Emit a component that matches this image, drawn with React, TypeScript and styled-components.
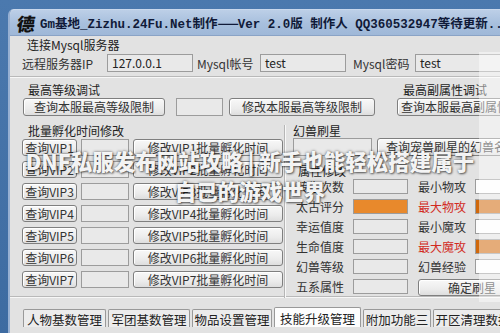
import React from 'react';
import styled, { createGlobalStyle } from 'styled-components';

const GlobalStyle = createGlobalStyle`
  html, body {
    margin: 0;
    padding: 0;
  }
  body {
    width: 500px;
    height: 333px;
    overflow: hidden;
    position: relative;
    background: linear-gradient(180deg, #4b79ae 0%, #3d6ba1 100%);
    font-family: "Noto Sans CJK SC", "Liberation Sans", sans-serif;
    color: #333;
  }
`;

const Window = styled.div`
  margin: 9px 0 0 8px;
  width: 520px;
  height: 330px;
  background: #e2e2e2;
  border-left: 2px solid #97b0d2;
  border-top: 1px solid #c9d8ec;
  border-top-left-radius: 6px;
  overflow: hidden;
`;

const TitleBar = styled.div`
  height: 25px;
  display: flex;
  align-items: center;
  gap: 3px;
  padding-left: 7px;
  background: linear-gradient(180deg, #bccfe7 0%, #a7bfdd 55%, #9fb8d8 100%);
  border-bottom: 1px solid #8aa3c6;
`;

const AppIcon = styled.span`
  width: 20px;
  font-size: 18px;
  font-weight: 900;
  line-height: 20px;
  color: #111;
  transform: skewX(-8deg);
`;

const TitleText = styled.span`
  font-family: "Liberation Mono", "Noto Sans CJK SC", monospace;
  font-size: 12.5px;
  font-weight: bold;
  color: #101a38;
  white-space: nowrap;
`;

const Dash = styled.span`
  font-family: "Noto Sans CJK SC", sans-serif;
  letter-spacing: -1px;
`;

const Client = styled.div`
  padding: 3px 0 0 12px;
`;

const Legend = styled.div<{ $indent?: number }>`
  height: 12px;
  line-height: 12px;
  font-size: 12px;
  padding-left: ${p => p.$indent ?? 6}px;
  color: #222;
  white-space: nowrap;
`;

const Row = styled.div<{ $top?: number }>`
  display: flex;
  align-items: center;
  margin-top: ${p => p.$top ?? 0}px;
`;

const Label = styled.span<{ $w: number; $red?: boolean }>`
  width: ${p => p.$w}px;
  flex: none;
  font-size: 12px;
  line-height: 15px;
  white-space: nowrap;
  color: ${p => (p.$red ? '#d22a22' : '#333')};
`;

const Field = styled.div<{ $w: number; $h?: number; $bg?: string; $ml?: number }>`
  box-sizing: border-box;
  flex: none;
  width: ${p => p.$w}px;
  height: ${p => p.$h ?? 18}px;
  margin-left: ${p => p.$ml ?? 0}px;
  padding-left: 4px;
  border: 1px solid #9c9c9c;
  background: ${p => p.$bg ?? '#e9e9e9'};
  font-size: 12px;
  line-height: ${p => (p.$h ?? 18) - 2}px;
  color: #222;
  white-space: nowrap;
`;

const Button = styled.div<{ $w: number; $h?: number; $ml?: number }>`
  box-sizing: border-box;
  flex: none;
  width: ${p => p.$w}px;
  height: ${p => p.$h ?? 18}px;
  margin-left: ${p => p.$ml ?? 0}px;
  border: 1px solid #7f7f7f;
  border-radius: 3px;
  background: linear-gradient(180deg, #f8f8f8 0%, #ececec 60%, #dedede 100%);
  box-shadow: inset 1px 1px 0 #ffffff;
  font-size: 12px;
  line-height: ${p => (p.$h ?? 18) - 2}px;
  text-align: center;
  color: #333;
  white-space: nowrap;
  overflow: hidden;
`;

const Divider = styled.div<{ $top: number }>`
  margin: ${p => p.$top}px 0 0 -12px;
  border-top: 1px solid #b9b9b9;
  border-bottom: 1px solid #f7f7f7;
`;

const LevelSection = styled.div`
  display: grid;
  grid-template-columns: 373px 1fr;
  margin-top: 6px;
`;

const MainSection = styled.div`
  display: grid;
  grid-template-columns: 262px 1fr;
  margin-top: 9px;
`;

const VipList = styled.div`
  display: flex;
  flex-direction: column;
  gap: 5px;
  margin-top: 2px;
`;

const VipRow = styled.div`
  display: flex;
  gap: 4px;
`;

const PetColumn = styled.div`
  border-left: 1px solid #b6b6b6;
  box-shadow: inset 1px 0 0 #f8f8f8;
  padding-left: 8px;
  margin-bottom: -10px;
`;

const StatGrid = styled.div`
  display: grid;
  grid-template-columns: 57px 55px 10px 57px 1fr;
  grid-auto-rows: 15px;
  row-gap: 5px;
  align-items: center;
  margin: 2px 0 0 3px;
`;

const Gap = styled.span``;

const TabStrip = styled.div`
  display: flex;
  align-items: flex-end;
  gap: 2px;
  height: 20px;
  margin: 9px 0 0 1px;
`;

const Tab = styled.div<{ $w: number; $active?: boolean }>`
  box-sizing: border-box;
  flex: none;
  width: ${p => p.$w}px;
  height: ${p => (p.$active ? 20 : 18)}px;
  border: 1px solid #999;
  border-bottom: none;
  border-radius: 2px 2px 0 0;
  background: ${p => (p.$active ? '#fdfdfd' : '#ececec')};
  font-size: 12.5px;
  line-height: ${p => (p.$active ? 21 : 19)}px;
  text-align: center;
  color: #222;
  white-space: nowrap;
  overflow: hidden;
`;

const Haze = styled.div`
  position: absolute;
  left: 479px;
  top: 52px;
  width: 21px;
  height: 250px;
  background: rgba(255, 255, 255, 0.45);
  pointer-events: none;
`;

const Watermark = styled.div`
  position: absolute;
  left: 0;
  top: 146px;
  width: 500px;
  text-align: center;
  font-family: "Noto Sans CJK SC", "Liberation Sans", sans-serif;
  font-size: 21.5px;
  font-weight: 900;
  line-height: 30px;
  color: rgba(255, 255, 255, 0.95);
  text-shadow: 0 0 3px rgba(0, 0, 0, 0.6), 1px 1px 2px rgba(0, 0, 0, 0.45);
  pointer-events: none;
`;

const vips = [1, 2, 3, 4, 5, 6, 7];

type Stat = { label: string; red?: boolean; bg?: string };

const statRows: [Stat, Stat | null][] = [
  [{ label: '转生次数' }, { label: '最小物攻', bg: '#fdfdfd' }],
  [{ label: '太古评分', bg: '#e8892c' }, { label: '最大物攻', red: true, bg: '#d0680c' }],
  [{ label: '幸运值度' }, { label: '最小魔攻', bg: '#fdfdfd' }],
  [{ label: '生命值度' }, { label: '最大魔攻', red: true, bg: '#d0680c' }],
  [{ label: '幻兽等级' }, { label: '幻兽经验', bg: '#fdfdfd' }],
  [{ label: '五系属性' }, null],
];

const tabs = [
  { name: '人物基数管理', w: 83 },
  { name: '军团基数管理', w: 82 },
  { name: '物品设置管理', w: 80 },
  { name: '技能升级管理', w: 87, active: true },
  { name: '附加功能三', w: 68 },
  { name: '开区清理数据', w: 80 },
];

export default function App() {
  return (
    <>
      <GlobalStyle />
      <Window>
        <TitleBar>
          <AppIcon>德</AppIcon>
          <TitleText>
            Gm基地_Zizhu.24Fu.Net制作<Dash>——</Dash>Ver 2.0版  制作人 QQ360532947等待更新..
          </TitleText>
        </TitleBar>
        <Client>
          <Legend $indent={5}>连接Mysql服务器</Legend>
          <Row $top={3}>
            <Label $w={85}>远程服务器IP</Label>
            <Field $w={86}>127.0.0.1</Field>
            <Label $w={63} style={{ paddingLeft: 4 }}>Mysql帐号</Label>
            <Field $w={86}>test</Field>
            <Label $w={62} style={{ paddingLeft: 7 }}>Mysql密码</Label>
            <Field $w={95}>test</Field>
          </Row>
          <Divider $top={4} />

          <LevelSection>
            <div>
              <Legend>最高等级调试</Legend>
              <Row $top={2}>
                <Button $w={142} $ml={1}>查询本服最高等级限制</Button>
                <Field $w={47} $ml={11} />
                <Button $w={146} $ml={6}>修改本服最高等级限制</Button>
              </Row>
            </div>
            <div>
              <Legend $indent={8}>最高副属性调试</Legend>
              <Row $top={2}>
                <Button $w={140} $ml={2}>查询本服最高副属性调试</Button>
              </Row>
            </div>
          </LevelSection>

          <MainSection>
            <div>
              <Legend>批量孵化时间修改</Legend>
              <VipList>
                {vips.map(n => (
                  <VipRow key={n}>
                    <Button $w={55} $h={17}>查询VIP{n}</Button>
                    <Field $w={48} $h={17} />
                    <Button $w={150} $h={17}>修改VIP{n}批量孵化时间</Button>
                  </VipRow>
                ))}
              </VipList>
            </div>
            <PetColumn>
              <Legend $indent={0}>幻兽刷星</Legend>
              <Row $top={1}>
                <Field $w={79} />
                <Button $w={150} $ml={5}>查询宠兽刷星的幻兽名称</Button>
              </Row>
              <Legend $indent={5} style={{ marginTop: 9 }}>属性修改</Legend>
              <StatGrid>
                {statRows.map(([left, right]) => (
                  <React.Fragment key={left.label}>
                    <Label $w={57} $red={left.red}>{left.label}</Label>
                    <Field $w={55} $h={15} $bg={left.bg} />
                    <Gap />
                    {right ? (
                      <>
                        <Label $w={57} $red={right.red}>{right.label}</Label>
                        <Field $w={40} $h={15} $bg={right.bg} />
                      </>
                    ) : (
                      <Button $w={108} $h={17} style={{ gridColumn: 'span 2', alignSelf: 'start' }}>
                        确定刷星
                      </Button>
                    )}
                  </React.Fragment>
                ))}
              </StatGrid>
            </PetColumn>
          </MainSection>

          <Divider $top={8} />
          <TabStrip>
            {tabs.map(t => (
              <Tab key={t.name} $w={t.w} $active={t.active}>{t.name}</Tab>
            ))}
          </TabStrip>
        </Client>
      </Window>
      <Haze />
      <Watermark>
        DNF私服发布网站攻略 | 新手也能轻松搭建属于
        <br />
        自己的游戏世界
      </Watermark>
    </>
  );
}
